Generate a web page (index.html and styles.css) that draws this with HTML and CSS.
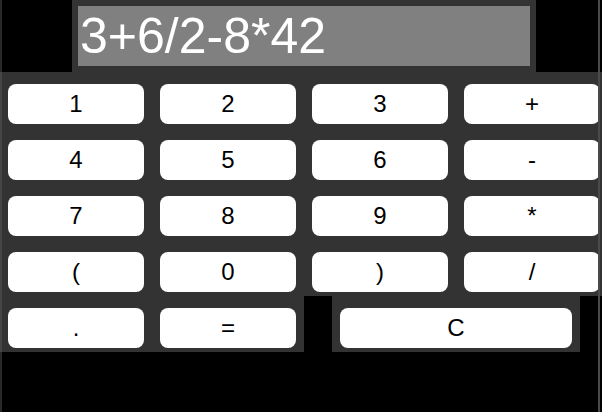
FILE: index.html
```html
<!DOCTYPE html>
<html>
<head>
<meta charset="utf-8">
<link rel="stylesheet" href="styles.css">
</head>
<body>
<div class="page">
  <div class="top">
    <div class="display">3+6/2-8*42</div>
  </div>
  <div class="keys">
    <div class="row">
      <button class="key">1</button><button class="key">2</button><button class="key">3</button><button class="key">+</button>
    </div>
    <div class="row">
      <button class="key">4</button><button class="key">5</button><button class="key">6</button><button class="key">-</button>
    </div>
    <div class="row">
      <button class="key">7</button><button class="key">8</button><button class="key">9</button><button class="key">*</button>
    </div>
    <div class="row">
      <button class="key">(</button><button class="key">0</button><button class="key">)</button><button class="key">/</button>
    </div>
    <div class="last">
      <div class="group">
        <button class="key">.</button><button class="key">=</button>
      </div>
      <div class="group">
        <button class="key wide">C</button>
      </div>
    </div>
  </div>
  <div class="edge-left"></div>
  <div class="edge-right"></div>
</div>
</body>
</html>
```
FILE: styles.css
```css
html, body {
  margin: 0;
  padding: 0;
  background: #000;
}
body {
  font-family: "Liberation Sans", Arial, sans-serif;
  overflow: hidden;
}
.page {
  position: relative;
  width: 602px;
  height: 412px;
  overflow: hidden;
  background: #000;
}
.top {
  display: flex;
  padding-left: 72px;
}
.display {
  box-sizing: border-box;
  width: 464px;
  height: 72px;
  border: 6px solid #333333;
  background: #808080;
  color: #fff;
  font-size: 50px;
  line-height: 60px;
  padding-left: 2px;
  white-space: nowrap;
}
.keys {
  display: flex;
  flex-direction: column;
}
.row {
  display: flex;
  background: #333333;
  padding: 12px 0 4px 0;
  width: 602px;
}
.key {
  flex: none;
  box-sizing: border-box;
  width: 136px;
  height: 40px;
  margin: 0 8px;
  padding: 0;
  border: none;
  border-radius: 8px;
  background: #fff;
  color: #000;
  font-family: "Liberation Sans", Arial, sans-serif;
  font-size: 24px;
  line-height: 40px;
  text-align: center;
}
.key.wide {
  width: 232px;
}
.last {
  display: flex;
  gap: 28px;
}
.group {
  display: flex;
  background: #333333;
  padding: 12px 0 4px 0;
}
.edge-left {
  position: absolute;
  left: 0;
  top: 0;
  width: 2px;
  height: 412px;
  background: rgba(90, 90, 90, 0.45);
}
.edge-right {
  position: absolute;
  left: 598px;
  top: 0;
  width: 2px;
  height: 412px;
  background: #4a4a4a;
}
```
